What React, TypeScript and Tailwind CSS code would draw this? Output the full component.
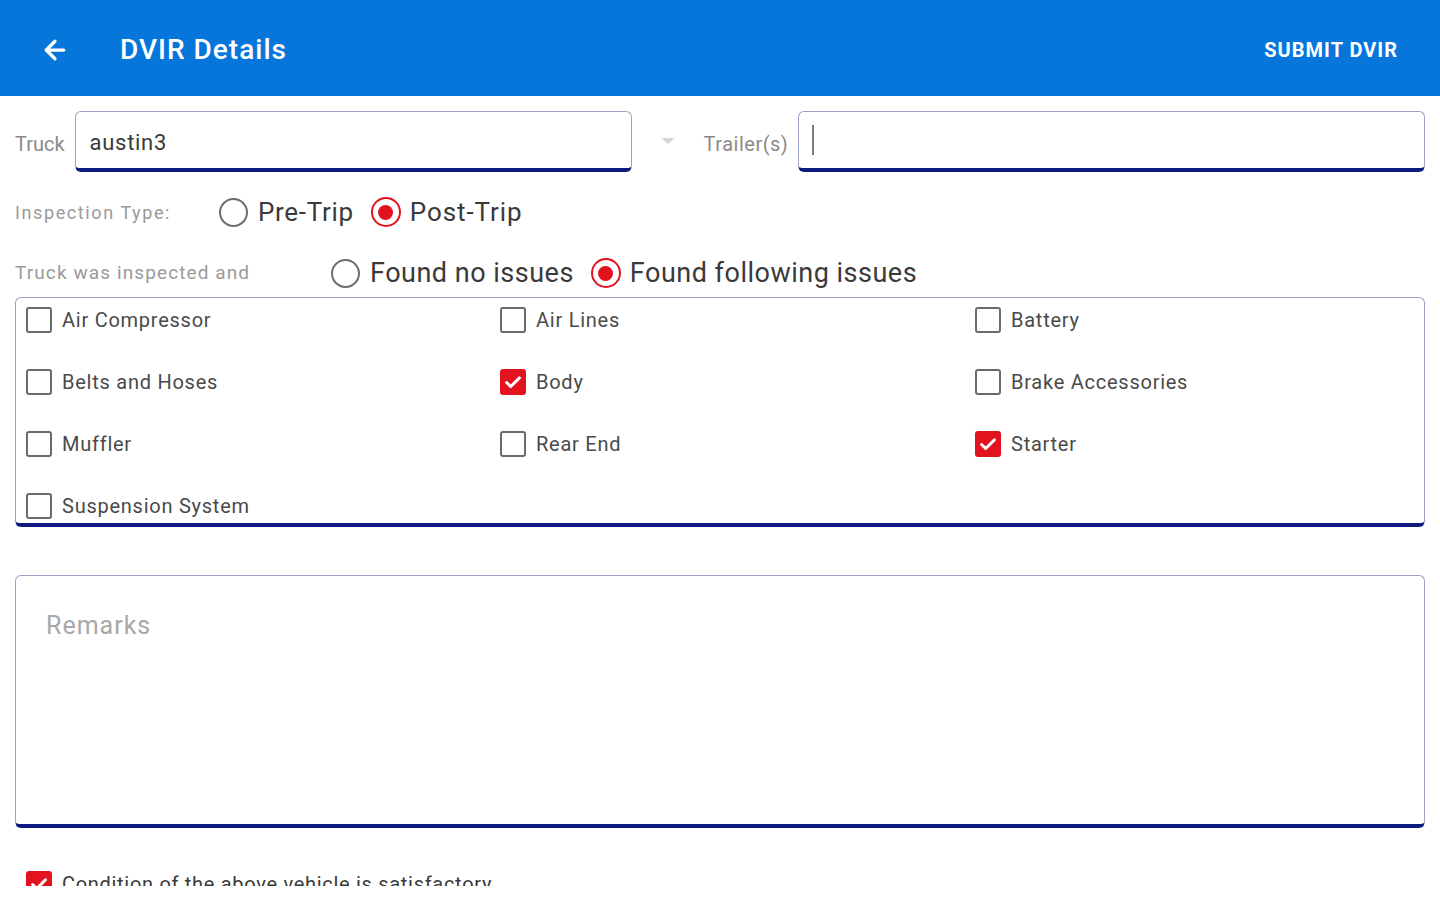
import { ArrowLeft } from 'lucide-react'

// Formulário DVIR: cabeçalho azul, campos do camião, tipo de inspeção e lista de defeitos
const items: { label: string; checked?: boolean }[] = [
  { label: 'Air Compressor' },
  { label: 'Air Lines' },
  { label: 'Battery' },
  { label: 'Belts and Hoses' },
  { label: 'Body', checked: true },
  { label: 'Brake Accessories' },
  { label: 'Muffler' },
  { label: 'Rear End' },
  { label: 'Starter', checked: true },
  { label: 'Suspension System' },
]

function Radio({ selected }: { selected?: boolean }) {
  return selected ? (
    <span className="flex h-[30px] w-[30px] shrink-0 items-center justify-center rounded-full border-[2.5px] border-[#e3121f]">
      <span className="h-[15px] w-[15px] rounded-full bg-[#e3121f]" />
    </span>
  ) : (
    <span className="h-[29px] w-[29px] shrink-0 rounded-full border-2 border-[#6e6e6e]" />
  )
}

function Checkbox({ checked }: { checked?: boolean }) {
  if (checked) {
    return (
      <span className="flex h-[26px] w-[26px] shrink-0 items-center justify-center rounded-[3px] bg-[#e3121f]">
        <svg viewBox="0 0 24 24" className="h-[22px] w-[22px]" fill="none" stroke="white" strokeWidth={3.2} strokeLinecap="round" strokeLinejoin="round">
          <path d="M5 12.5l4.5 4.5L19 7.5" />
        </svg>
      </span>
    )
  }
  return <span className="h-[26px] w-[26px] shrink-0 rounded-[3px] border-2 border-[#6b6b6b]" />
}

export default function App() {
  return (
    <div className="h-[900px] w-[1440px] overflow-hidden bg-white font-['Roboto',sans-serif]">
      {/* Barra superior */}
      <header className="flex h-[96px] items-center bg-[#0676db] pl-[40px] pr-[42px] pt-[4px] text-white">
        <ArrowLeft className="h-[30px] w-[30px]" strokeWidth={2.6} />
        <h1 className="ml-[50px] text-[28px] font-medium tracking-[1px]">DVIR Details</h1>
        <span className="ml-auto text-[20px] font-bold tracking-[1px]">SUBMIT DVIR</span>
      </header>

      {/* Área de conteúdo, cortada no fundo como se estivesse a fazer scroll */}
      <div className="h-[790px] overflow-hidden px-[15px]">
        {/* Camião e reboques */}
        <div className="mt-[15px] flex items-center">
          <span className="pt-[4px] text-[20px] text-[#8a8a8a]">Truck</span>
          <div className="ml-[10px] flex h-[61px] w-[557px] items-center rounded-[6px] border border-[#9ba0cc] border-b-4 border-b-[#0d1a80] pl-[14px] pt-[4px]">
            <span className="text-[22px] tracking-[0.7px] text-[#3a3a3a]">austin3</span>
          </div>
          <div className="flex w-[72px] justify-center">
            <span className="mt-[-2px] h-0 w-0 border-x-[7px] border-t-[6px] border-x-transparent border-t-[#d6d6d6]" />
          </div>
          <span className="pt-[4px] text-[20px] tracking-[0.5px] text-[#8a8a8a]">Trailer(s)</span>
          <div className="ml-[10px] flex h-[61px] flex-1 items-center rounded-[6px] border border-[#9ba0cc] border-b-4 border-b-[#0d1a80] pl-[13px]">
            <span className="h-[30px] w-[2px] bg-[#7a7a7a]" />
          </div>
        </div>

        {/* Tipo de inspeção */}
        <div className="mt-[20px] flex h-[40px] items-center">
          <span className="w-[204px] text-[18px] tracking-[1.6px] text-[#9a9a9a]">Inspection Type:</span>
          <Radio />
          <span className="ml-[10px] text-[26px] tracking-[0.7px] text-[#3a3a3a]">Pre-Trip</span>
          <span className="ml-[17px]" />
          <Radio selected />
          <span className="ml-[9px] text-[26px] tracking-[0.9px] text-[#3a3a3a]">Post-Trip</span>
        </div>

        {/* Resultado da inspeção */}
        <div className="mt-[21px] flex h-[40px] items-center">
          <span className="w-[316px] text-[19px] tracking-[1.1px] text-[#9a9a9a]">Truck was inspected and</span>
          <Radio />
          <span className="ml-[10px] text-[27px] tracking-[0.5px] text-[#3a3a3a]">Found no issues</span>
          <span className="ml-[17px]" />
          <Radio selected />
          <span className="ml-[9px] text-[27px] tracking-[0.5px] text-[#3a3a3a]">Found following issues</span>
        </div>

        {/* Lista de componentes */}
        <div className="mt-[4px] grid h-[230px] grid-cols-[474px_475px_1fr] content-start gap-y-[36px] rounded-[6px] border border-[#9ba0cc] border-b-4 border-b-[#0d1a80] pl-[10px] pt-[9px]">
          {items.map((item) => (
            <label key={item.label} className="flex h-[26px] items-center gap-[10px]">
              <Checkbox checked={item.checked} />
              <span className="text-[20px] tracking-[0.75px] text-[#4a4a4a]">{item.label}</span>
            </label>
          ))}
        </div>

        {/* Observações */}
        <div className="mt-[48px] h-[253px] rounded-[6px] border border-[#9ba0cc] border-b-4 border-b-[#0d1a80] pl-[30px] pt-[31px]">
          <span className="text-[25px] tracking-[1px] text-[#a8a8a8]">Remarks</span>
        </div>

        {/* Confirmação final */}
        <div className="mt-[41px] flex items-center gap-[10px] pl-[11px]">
          <Checkbox checked />
          <span className="text-[20px] tracking-[0.7px] text-[#3a3a3a]">Condition of the above vehicle is satisfactory</span>
        </div>
      </div>
    </div>
  )
}
